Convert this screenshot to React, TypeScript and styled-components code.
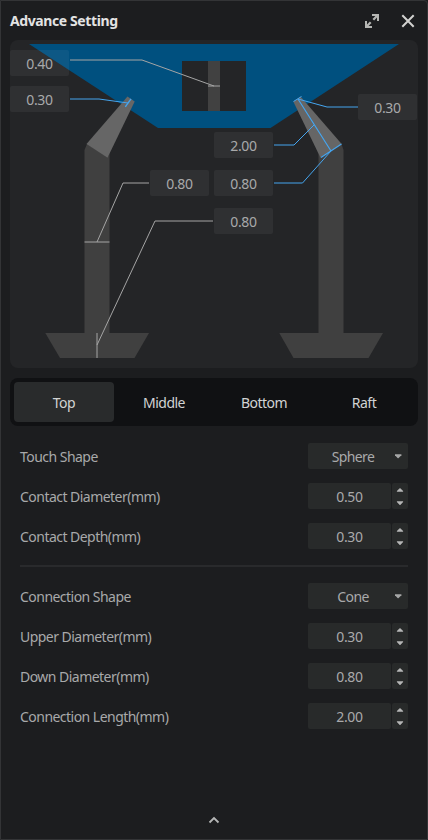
import React from "react";
import styled, { createGlobalStyle } from "styled-components";

const GlobalStyle = createGlobalStyle`
  * { box-sizing: border-box; }
  body { margin: 0; background: #1c1d1f; }
`;

const Panel = styled.main`
  width: 428px;
  height: 840px;
  display: flex;
  flex-direction: column;
  padding: 0 9px;
  background: #1c1d1f;
  border: 1px solid #333436;
  border-radius: 0 4px 0 0;
  font: 14px/20px "Noto Sans", sans-serif;
  letter-spacing: -0.35px;
  color: #a8a9aa;
  overflow: hidden;
`;

const Header = styled.header`
  height: 39px;
  display: flex;
  align-items: center;
  justify-content: space-between;
  flex: none;
`;

const Title = styled.h1`
  margin: 0;
  font-size: 14px;
  line-height: 20px;
  font-weight: 700;
  letter-spacing: -0.4px;
  color: #e3e3e3;
`;

const HeaderActions = styled.div`
  display: flex;
  gap: 20px;
  padding-right: 2px;
`;

const IconButton = styled.button`
  width: 16px;
  height: 16px;
  padding: 0;
  border: 0;
  background: none;
  display: flex;
`;

const Preview = styled.section`
  position: relative;
  height: 328px;
  flex: none;
  border-radius: 8px;
  background: #242527;
  overflow: hidden;
`;

const Drawing = styled.svg`
  display: block;
`;

const Measure = styled.span<{ $x: number; $y: number }>`
  position: absolute;
  left: ${(p) => p.$x}px;
  top: ${(p) => p.$y}px;
  width: 59px;
  height: 26px;
  line-height: 27px;
  text-align: center;
  border-radius: 2px;
  background: rgba(255, 255, 255, 0.05);
`;

const TabBar = styled.nav`
  display: flex;
  flex: none;
  height: 48px;
  margin-top: 10px;
  padding: 4px;
  border-radius: 8px;
  background: #101113;
`;

const Tab = styled.button<{ $active?: boolean }>`
  flex: 1;
  padding: 2px 0 0;
  border: 0;
  border-radius: 4px;
  background: ${(p) => (p.$active ? "#292b2c" : "transparent")};
  color: #d2d3d3;
  font: inherit;
  letter-spacing: -0.5px;
`;

const Form = styled.div`
  flex: 1;
  padding: 10px 10px 0;
`;

const Row = styled.div`
  height: 40px;
  display: flex;
  align-items: center;
  justify-content: space-between;
`;

const Label = styled.label`
  padding-top: 2px;
  letter-spacing: -0.53px;
`;

const Divider = styled.hr`
  height: 2px;
  margin: 9px 0;
  border: 0;
  background: #292a2c;
`;

const Select = styled.div`
  width: 100px;
  height: 26px;
  display: flex;
  align-items: center;
  border-radius: 2px;
  background: #282a2a;
`;

const SelectValue = styled.span`
  flex: 1;
  padding: 2px 0 0 10px;
  text-align: center;
  letter-spacing: -0.6px;
`;

const Caret = styled.svg`
  width: 20px;
  height: 26px;
`;

const Spin = styled.div`
  display: flex;
  gap: 1px;
  height: 26px;
`;

const SpinValue = styled.span`
  width: 83px;
  border-radius: 2px;
  background: #282a2a;
  line-height: 27px;
  text-align: center;
`;

const Stepper = styled.svg`
  width: 16px;
  height: 26px;
  border-radius: 2px;
  background: #282a2a;
`;

const Footer = styled.footer`
  height: 39px;
  display: flex;
  justify-content: center;
  align-items: center;
`;

const measures = [
  { x: 0, y: 10, value: "0.40" },
  { x: 0, y: 46, value: "0.30" },
  { x: 348, y: 54, value: "0.30" },
  { x: 204, y: 92, value: "2.00" },
  { x: 140, y: 130, value: "0.80" },
  { x: 204, y: 130, value: "0.80" },
  { x: 204, y: 168, value: "0.80" },
];

const SupportPreview = () => (
  <Preview>
    <Drawing width="408" height="328" viewBox="10 40 408 328">
      <path d="M29 44H399L270.5 128H158Z" fill="#00507f" />
      <path d="M182 61h64v50h-64z" fill="#242527" />
      <path d="M208 61h12v50h-12z" fill="#414141" />
      <g fill="#404040">
        <path d="M84.5 333.5V150L87 144L107.5 157.5L109.5 153V333.5Z" />
        <path d="M45.3 333H149L134.5 358H60Z" />
        <path d="M343.5 333.5V150L341.5 144L321 157.5L318.5 153V333.5Z" />
        <path d="M279.3 333H383L368.5 358H293.5Z" />
      </g>
      <path d="M127.5 96.5L134.7 101.5L107.5 157.7L86.5 144Z" fill="#666" />
      <path d="M300.5 96.5L293.3 101.5L320.5 157.7L341.7 144Z" fill="#666" />
      <g fill="none" stroke="#a5a5a5" strokeWidth="1">
        <path d="M70 60H142L214 86M208 86H220" />
        <path d="M149 183H123L97 242M84.5 242H109.5" />
        <path d="M213 221H155L97 345M97 333V358" />
      </g>
      <g fill="none" stroke="#45a5ef" strokeWidth="1">
        <path d="M70 99H99L128 103" />
        <path d="M125.3 106.8L131 98.8" strokeWidth="1.4" />
        <path d="M358 107H327L298 99M293.5 101.5L301.5 96.5" />
        <path d="M298 99L331 151M321 157.5L341.5 144" strokeWidth="1.2" />
        <path d="M274 145H294L314 125M274 183H302.5L331 151" />
      </g>
    </Drawing>
    {measures.map((m) => (
      <Measure key={`${m.x}-${m.y}`} $x={m.x} $y={m.y}>
        {m.value}
      </Measure>
    ))}
  </Preview>
);

const SelectRow = ({ label, value }: { label: string; value: string }) => (
  <Row>
    <Label>{label}</Label>
    <Select>
      <SelectValue>{value}</SelectValue>
      <Caret viewBox="0 0 20 26">
        <path d="M7 11.3h6.4v1l-3 2.9h-.6l-2.8-2.9z" fill="#a5a6a6" />
      </Caret>
    </Select>
  </Row>
);

const SpinRow = ({ label, value }: { label: string; value: string }) => (
  <Row>
    <Label>{label}</Label>
    <Spin>
      <SpinValue>{value}</SpinValue>
      <Stepper viewBox="0 0 16 26">
        <path
          d="M4.9 8.8V8l2.8-2.8h.6L11.1 8v.8zM4.9 18.3v.8l2.8 2.8h.6l2.8-2.8v-.8z"
          fill="#b5b6b6"
        />
      </Stepper>
    </Spin>
  </Row>
);

export default function App() {
  return (
    <>
      <GlobalStyle />
      <Panel>
        <Header>
          <Title>Advance Setting</Title>
          <HeaderActions>
            <IconButton aria-label="Expand">
              <svg width="16" height="16" viewBox="0 0 16 16" fill="#b5b6b3">
                <path d="M8 1H15V8H13V4.6L10.1 7.5L8.5 5.9L11.4 3H8ZM8 15H1V8H3V11.4L5.9 8.5L7.5 10.1L4.6 13H8Z" />
              </svg>
            </IconButton>
            <IconButton aria-label="Close">
              <svg width="16" height="16" viewBox="0 0 16 16" fill="none" stroke="#d2d2d0" strokeWidth="2">
                <path d="M2.3 2.3L13.7 13.7M13.7 2.3L2.3 13.7" />
              </svg>
            </IconButton>
          </HeaderActions>
        </Header>
        <SupportPreview />
        <TabBar>
          <Tab $active>Top</Tab>
          <Tab>Middle</Tab>
          <Tab>Bottom</Tab>
          <Tab>Raft</Tab>
        </TabBar>
        <Form>
          <SelectRow label="Touch Shape" value="Sphere" />
          <SpinRow label="Contact Diameter(mm)" value="0.50" />
          <SpinRow label="Contact Depth(mm)" value="0.30" />
          <Divider />
          <SelectRow label="Connection Shape" value="Cone" />
          <SpinRow label="Upper Diameter(mm)" value="0.30" />
          <SpinRow label="Down Diameter(mm)" value="0.80" />
          <SpinRow label="Connection Length(mm)" value="2.00" />
        </Form>
        <Footer>
          <svg width="12" height="8" viewBox="0 0 12 8" fill="none" stroke="#b5b6b6" strokeWidth="1.8">
            <path d="M1.5 6.5L6 2L10.5 6.5" />
          </svg>
        </Footer>
      </Panel>
    </>
  );
}
